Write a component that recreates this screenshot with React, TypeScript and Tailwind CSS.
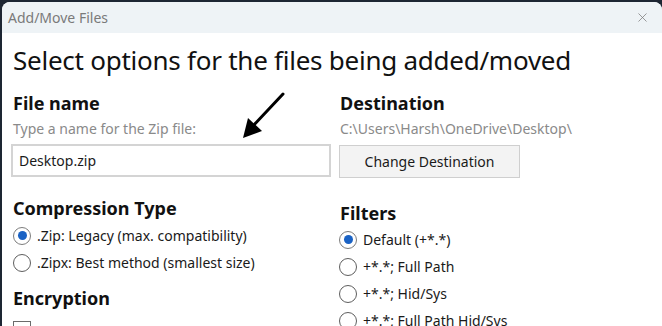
import { X } from "lucide-react";

function Radio({ checked, label }: { checked?: boolean; label: string }) {
  return (
    <label className="flex h-[27px] items-center gap-[6px]">
      <span
        className={
          checked
            ? "flex h-[18px] w-[18px] items-center justify-center rounded-full border-[1.5px] border-[#7d7d7d] bg-white"
            : "h-[18px] w-[18px] rounded-full border-[1.5px] border-[#5e5e5e] bg-white"
        }
      >
        {checked && <span className="h-[9px] w-[9px] rounded-full bg-[#1a62c4]" />}
      </span>
      <span className="text-[14px] text-[#1a1a1a]">{label}</span>
    </label>
  );
}

export default function App() {
  return (
    <div className="h-[326px] w-[662px] overflow-hidden bg-[#1d2633] pl-[2px] pt-[2px] font-['Noto_Sans','Open_Sans',sans-serif]">
      <div className="relative h-full w-full overflow-hidden rounded-tl-lg rounded-tr-lg bg-white">
        <div className="flex h-[31px] items-center justify-between bg-[#eef3f6] pl-[6px] pr-[12px]">
          <span className="text-[14px] text-[#7a7a7a]">Add/Move Files</span>
          <X className="h-[15px] w-[15px] text-[#7a7a7a]" strokeWidth={1.2} />
        </div>

        <div className="px-[11px]">
          <h1 className="mt-[9px] text-[26px] leading-[36px] tracking-[-0.25px] text-[#111]">
            Select options for the files being added/moved
          </h1>

          <div className="mt-[13px] flex gap-[9px]">
            <div className="w-[318px]">
              <h2 className="text-[18px] font-bold leading-[24px] text-[#111]">File name</h2>
              <p className="mt-[4px] text-[14px] leading-[20px] text-[#8a8a8a]">Type a name for the Zip file:</p>
              <div className="-ml-[2px] mt-[5px] flex h-[33px] w-[320px] items-center border-2 border-[#d4d4d4] px-[6px] text-[14px] text-[#1a1a1a]">
                Desktop.zip
              </div>
              <h2 className="mt-[19px] text-[18px] font-bold leading-[24px] text-[#111]">Compression Type</h2>
              <div className="mt-[2px]">
                <Radio checked label=".Zip: Legacy (max. compatibility)" />
                <Radio label=".Zipx: Best method (smallest size)" />
              </div>
              <h2 className="mt-[10px] text-[18px] font-bold leading-[24px] text-[#111]">Encryption</h2>
              <div className="mt-[11px] h-[18px] w-[18px] border-[1.5px] border-[#6b6b6b]" />
            </div>

            <div className="flex-1">
              <h2 className="text-[18px] font-bold leading-[24px] text-[#111]">Destination</h2>
              <p className="mt-[4px] text-[14px] leading-[20px] text-[#8a8a8a]">C:\Users\Harsh\OneDrive\Desktop\</p>
              <button className="-ml-[1px] mt-[6px] flex h-[33px] w-[181px] items-center justify-center border border-[#cfcfcf] bg-[#f3f3f3] text-[14px] text-[#1a1a1a]">
                Change Destination
              </button>
              <h2 className="mt-[23px] text-[18px] font-bold leading-[24px] text-[#111]">Filters</h2>
              <div className="-ml-[1px] mt-[1px]">
                <Radio checked label="Default (+*.*)" />
                <Radio label="+*.*; Full Path" />
                <Radio label="+*.*; Hid/Sys" />
                <Radio label="+*.*; Full Path Hid/Sys" />
              </div>
            </div>
          </div>
        </div>

        <svg className="absolute left-[236px] top-[86px]" width="52" height="54" viewBox="0 0 52 54">
          <line x1="45" y1="6" x2="14" y2="39" stroke="#000" strokeWidth="3" strokeLinecap="round" />
          <polygon points="5,50 10,30 24,43" fill="#000" />
        </svg>
      </div>
    </div>
  );
}
